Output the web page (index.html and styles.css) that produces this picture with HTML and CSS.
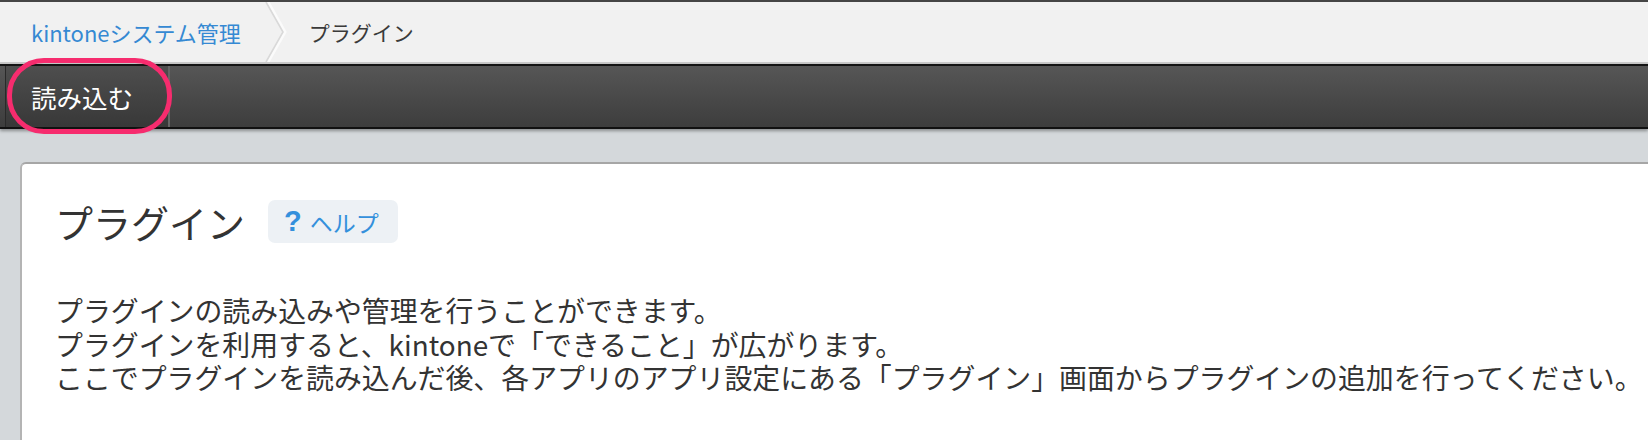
FILE: index.html
```html
<!DOCTYPE html>
<html lang="ja">
<head>
    <meta charset="UTF-8">
    <title>プラグイン</title>
    <link rel="stylesheet" href="styles.css">
</head>
<body>
	<div class="header">
		<div class="crumbs">
			<a class="crumb-link" href="javascript:;">kintoneシステム管理</a>
			<svg class="crumb-sep" width="24" height="60" viewBox="0 0 24 60">
				<polyline points="3,0 20,30 3,60" fill="none" stroke="#fbfbfb" stroke-width="3"/>
				<polyline points="1,0 18,30 1,60" fill="none" stroke="#d9d9d9" stroke-width="1.6"/>
			</svg>
			<span class="crumb-current">プラグイン</span>
		</div>
		<div class="toolbar">
			<a class="tool-btn" href="javascript:;">読み込む</a>
		</div>
		<!-- 注目マーク -->
		<span class="mark"></span>
	</div>
	<div class="content">
		<div class="card">
			<div class="card-head">
				<h1 class="title">プラグイン</h1>
				<a class="help" href="javascript:;"><b>?</b><span>ヘルプ</span></a>
			</div>
			<p class="desc">プラグインの読み込みや管理を行うことができます。<br>プラグインを利用すると、kintoneで「できること」が広がります。<br>ここでプラグインを読み込んだ後、各アプリのアプリ設定にある「プラグイン」画面からプラグインの追加を行ってください。</p>
		</div>
	</div>
</body>
</html>
```

FILE: styles.css
```css
	html, body {
		margin: 0;
		height: 100%;
	}
	body {
		display: flex;
		flex-direction: column;
		font-family: "Noto Sans CJK JP", "Noto Sans", sans-serif;
		color: #333;
		background: #d4d8db;
		overflow: hidden;
	}
	a {
		text-decoration: none;
	}
	.header {
		position: relative;
	}
	.crumbs {
		display: flex;
		align-items: center;
		height: 60px;
		padding-left: 31px;
		background: #f1f1f1;
		border-top: 2px solid #454545;
		border-bottom: 2px solid #c9c9c9;
	}
	.crumb-link {
		font-size: 22px;
		color: #3589d3;
	}
	.crumb-sep {
		display: block;
		margin-left: 24px;
		margin-right: 20px;
	}
	.crumb-current {
		font-size: 21px;
		color: #3a3a3a;
	}
	.toolbar {
		display: flex;
		height: 61px;
		background: linear-gradient(to bottom, #565656, #3d3d3d);
		border-top: 2px solid #141414;
		border-bottom: 2px solid #111;
		box-shadow: 0 2px 3px rgba(0, 0, 0, .35);
	}
	.tool-btn {
		display: flex;
		align-items: center;
		width: 137px;
		margin-left: 5px;
		padding-left: 25px;
		font-size: 25.5px;
		color: #fff;
		background: linear-gradient(to bottom, #4e4e4e, #383838);
		border-left: 1px solid #2a2a2a;
		border-right: 2px solid #666;
	}
	.mark {
		position: absolute;
		left: 7px;
		top: 58px;
		width: 165px;
		height: 76px;
		box-sizing: border-box;
		border: 5px solid #f62c6e;
		border-radius: 37px;
	}
	.content {
		flex: 1;
		display: flex;
		padding: 33px 0 0 20px;
	}
	.card {
		flex: 1;
		padding: 36px 0 0 33px;
		background: #fff;
		border-top: 2px solid #a6a6a6;
		border-left: 2px solid #b4b4b4;
		border-top-left-radius: 6px;
	}
	.card-head {
		display: flex;
		align-items: center;
		height: 43px;
	}
	.title {
		margin: 0;
		font-size: 38px;
		font-weight: normal;
		color: #333;
		line-height: 43px;
	}
	.help {
		display: flex;
		align-items: center;
		height: 43px;
		margin-left: 23px;
		padding: 0 19px 0 16px;
		background: #edf1f5;
		border-radius: 7px;
		color: #3490dc;
	}
	.help b {
		font-family: "Liberation Sans", sans-serif;
		font-size: 29px;
		font-weight: bold;
	}
	.help span {
		margin-left: 8px;
		font-size: 23px;
	}
	.desc {
		margin: 51px 0 0;
		font-size: 27.9px;
		line-height: 33.5px;
		color: #333;
		white-space: nowrap;
	}
```
